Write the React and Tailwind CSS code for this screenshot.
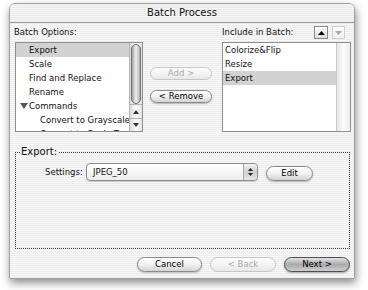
import React from 'react';

// pill button in the grey Aqua style
function AquaButton({ children, className = '', disabled, primary }) {
  const look = disabled
    ? 'border-[#c6c6c6] text-[#a8a8a8] bg-gradient-to-b from-[#fcfcfc] via-[#f4f4f4] to-[#e8e8e8]'
    : primary
    ? 'border-[#4e4e4e] text-black bg-gradient-to-b from-[#e4e4e4] via-[#a9a9a9] to-[#cfcfcf] shadow-[0_1px_2px_rgba(0,0,0,0.35)]'
    : 'border-[#8a8a8a] text-black bg-gradient-to-b from-white via-[#f1f1f1] to-[#d4d4d4] shadow-[0_1px_2px_rgba(0,0,0,0.25)]';
  return (
    <div className={`flex items-center justify-center rounded-full border text-[8.5px] leading-none ${look} ${className}`}>
      {children}
    </div>
  );
}

function Tri({ dir = 'up', color = '#000', w = 7, h = 4 }) {
  return (
    <svg width={w} height={h} viewBox={`0 0 ${w} ${h}`}>
      {dir === 'up' ? (
        <polygon points={`0,${h} ${w},${h} ${w / 2},0`} fill={color} />
      ) : (
        <polygon points={`0,0 ${w},0 ${w / 2},${h}`} fill={color} />
      )}
    </svg>
  );
}

const leftRows = [
  { label: 'Export', indent: 'pl-[13px]', selected: true },
  { label: 'Scale', indent: 'pl-[13px]' },
  { label: 'Find and Replace', indent: 'pl-[13px]' },
  { label: 'Rename', indent: 'pl-[13px]' },
  { label: 'Commands', indent: 'pl-[4px]', open: true },
  { label: 'Convert to Grayscale', indent: 'pl-[24px]' },
  { label: 'Convert to Sepia Tone', indent: 'pl-[24px]' },
];

const rightRows = [
  { label: 'Colorize&Flip' },
  { label: 'Resize' },
  { label: 'Export', selected: true },
];

export default function App() {
  return (
    <div className="w-[368px] h-[290px] bg-white overflow-hidden pt-[3px] pl-[9px] font-['DejaVu_Sans',sans-serif] text-[#111]">
      <div className="w-[346px] h-[276px] flex flex-col rounded-t-[6px] border border-[#a0a0a0] shadow-[1px_4px_8px_rgba(0,0,0,0.45)] overflow-hidden">
        {/* title bar */}
        <div className="h-[19px] shrink-0 flex items-center justify-center border-b border-[#9c9c9c] bg-[repeating-linear-gradient(0deg,#e9e9e9_0px,#e9e9e9_1px,#f7f7f7_1px,#f7f7f7_2px)] text-[10px] leading-none">
          Batch Process
        </div>

        {/* body */}
        <div className="flex-1 flex flex-col pl-[5px] pr-[3px] bg-[repeating-linear-gradient(0deg,#ececec_0px,#ececec_1px,#f8f8f8_1px,#f8f8f8_2px)] text-[8.5px]">
          <div className="flex">
            {/* left column */}
            <div className="w-[128px] flex flex-col">
              <div className="h-[19px] flex items-center -ml-px">Batch Options:</div>
              <div className="h-[90px] flex border border-[#8e8e8e] bg-white">
                <div className="flex-1 overflow-hidden">
                  {leftRows.map((r) => (
                    <div
                      key={r.label}
                      className={`h-[14px] flex items-center whitespace-nowrap ${r.indent} ${r.selected ? 'bg-[#d2d2d2]' : ''}`}
                    >
                      {r.open && (
                        <span className="mr-[1px] flex">
                          <svg width="8" height="6" viewBox="0 0 8 6">
                            <polygon points="0,0 8,0 4,6" fill="#555" />
                          </svg>
                        </span>
                      )}
                      {r.label}
                    </div>
                  ))}
                </div>
                {/* scrollbar */}
                <div className="w-[13px] flex flex-col border-l border-[#b4b4b4] bg-gradient-to-r from-[#dcdcdc] via-[#fafafa] to-[#e4e4e4]">
                  <div className="h-[61px] mx-[1px] mt-[1px] rounded-full border border-[#6e6e6e] bg-gradient-to-r from-[#a6a6a6] via-[#f0f0f0] to-[#b0b0b0]" />
                  <div className="flex-1" />
                  <div className="h-[14px] flex items-center justify-center border-t border-[#b4b4b4]">
                    <Tri dir="up" color="#333" w={6} h={4} />
                  </div>
                  <div className="h-[13px] flex items-center justify-center border-t border-[#b4b4b4]">
                    <Tri dir="down" color="#333" w={6} h={4} />
                  </div>
                </div>
              </div>
            </div>

            {/* middle buttons */}
            <div className="w-[62px] ml-[7px] flex flex-col pt-[44px] gap-[10px]">
              <AquaButton disabled className="h-[13px]">Add &gt;</AquaButton>
              <AquaButton className="h-[13px]">&lt; Remove</AquaButton>
            </div>

            {/* right column */}
            <div className="w-[129px] ml-[10px] flex flex-col">
              <div className="h-[19px] flex items-center justify-between">
                <span>Include in Batch:</span>
                <div className="flex items-center gap-[4px] pr-[6px]">
                  <div className="w-[14px] h-[13px] flex items-center justify-center border border-[#8a8a8a] bg-gradient-to-b from-white to-[#dedede]">
                    <Tri dir="up" color="#000" w={7} h={4} />
                  </div>
                  <div className="w-[13px] h-[13px] flex items-center justify-center border border-[#cfcfcf] bg-gradient-to-b from-white to-[#eeeeee]">
                    <Tri dir="down" color="#a8a8a8" w={7} h={4} />
                  </div>
                </div>
              </div>
              <div className="h-[90px] flex border border-[#8e8e8e] bg-white">
                <div className="flex-1">
                  {rightRows.map((r) => (
                    <div
                      key={r.label}
                      className={`h-[14px] flex items-center pl-[2px] ${r.selected ? 'bg-[#d2d2d2]' : ''}`}
                    >
                      {r.label}
                    </div>
                  ))}
                </div>
                <div className="w-[14px] border-l border-[#c8c8c8] bg-gradient-to-r from-[#e6e6e6] via-[#fcfcfc] to-[#ededed]" />
              </div>
            </div>
          </div>

          {/* export group */}
          <fieldset className="mt-[14px] mr-[1px] h-[103px] border border-dotted border-[#333] px-0">
            <legend className="ml-[4px] px-[1px] text-[10px] leading-[12px]">Export:</legend>
            <div className="flex items-center mt-[5px] pl-[29px]">
              <span className="w-[41px]">Settings:</span>
              <div className="w-[172px] h-[18px] flex rounded-[4px] border border-[#8c8c8c] bg-gradient-to-b from-white to-[#ededed] shadow-[0_1px_1px_rgba(0,0,0,0.15)]">
                <div className="flex-1 flex items-center pl-[6px]">JPEG_50</div>
                <div className="w-[14px] flex flex-col items-center justify-center gap-[2px] border-l border-[#a8a8a8] rounded-r-[4px] bg-gradient-to-b from-[#f4f4f4] via-[#cfcfcf] to-[#e6e6e6]">
                  <Tri dir="up" color="#222" w={5} h={3} />
                  <Tri dir="down" color="#222" w={5} h={3} />
                </div>
              </div>
              <AquaButton className="w-[47px] h-[15px] ml-[8px] mt-[3px]">Edit</AquaButton>
            </div>
          </fieldset>

          {/* bottom buttons */}
          <div className="flex justify-end gap-[8px] mt-[8px] pr-[1px]">
            <AquaButton className="w-[65px] h-[15px]">Cancel</AquaButton>
            <AquaButton disabled className="w-[66px] h-[15px]">&lt; Back</AquaButton>
            <AquaButton primary className="w-[66px] h-[15px]">Next &gt;</AquaButton>
          </div>
        </div>
      </div>
    </div>
  );
}
